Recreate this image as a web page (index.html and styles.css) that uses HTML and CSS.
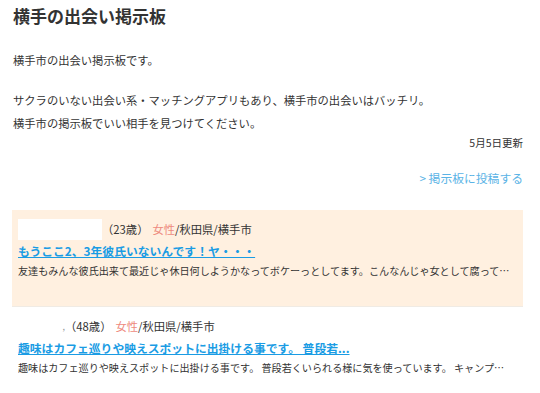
FILE: index.html
```html
<!DOCTYPE html>
<html lang="ja">
<head>
  <meta charset="UTF-8">
  <meta name="viewport" content="width=device-width, initial-scale=1.0">
  <link rel="stylesheet" href="styles.css">
  <title>横手の出会い掲示板</title>
</head>
<body>
  <div class="page">
    <h1>横手の出会い掲示板</h1>
    <p class="intro">横手市の出会い掲示板です。</p>
    <p class="intro">サクラのいない出会い系・マッチングアプリもあり、横手市の出会いはバッチリ。<br>横手市の掲示板でいい相手を見つけてください。</p>
    <div class="updated">5月5日更新</div>
    <div class="post-link"><a href="#">&gt; 掲示板に投稿する</a></div>

    <div class="board">
      <div class="entry entry-hl">
        <div class="entry-meta"><span class="name-box"></span><span class="age">（23歳）</span><span class="sex">女性</span>/秋田県/横手市</div>
        <a class="entry-title" href="#">もうここ2、3年彼氏いないんです！ヤ・・・</a>
        <div class="entry-text">友達もみんな彼氏出来て最近じゃ休日何しようかなってボケーっとしてます。こんなんじゃ女として腐って…</div>
      </div>
      <div class="entry">
        <div class="entry-meta"><span class="name-small">,</span><span class="age">（48歳）</span><span class="sex">女性</span>/秋田県/横手市</div>
        <a class="entry-title" href="#">趣味はカフェ巡りや映えスポットに出掛ける事です。 普段若...</a>
        <div class="entry-text">趣味はカフェ巡りや映えスポットに出掛ける事です。 普段若くいられる様に気を使っています。 キャンプ…</div>
      </div>
    </div>
  </div>
</body>
</html>
```

FILE: styles.css
```css
body {
  font-family: 'Noto Sans CJK JP', 'Noto Sans', sans-serif;
  background-color: #fff;
  color: #333;
  margin: 0;
  padding: 0;
}

.page {
  padding: 5px 17px 0 12px;
}

h1 {
  font-size: 17px;
  font-weight: bold;
  line-height: 22px;
  margin: 0 0 22px 1px;
  color: #333;
}

.intro {
  font-size: 11.3px;
  line-height: 23px;
  margin: 0 0 17px 1px;
}

.intro + .intro {
  margin-bottom: 0;
}

.updated {
  font-size: 10.5px;
  line-height: 16px;
  text-align: right;
}

.post-link {
  font-size: 11.8px;
  line-height: 20px;
  text-align: right;
  margin-top: 17px;
}

.post-link a {
  color: #5ab3e6;
  text-decoration: none;
}

.board {
  margin-top: 22px;
}

.entry {
  padding: 9px 6px 26px;
  border-bottom: 1px solid #f0ebe4;
}

.entry-hl {
  background-color: #fff0e0;
}

.entry-meta {
  font-size: 11.3px;
  line-height: 21px;
  height: 21px;
}

.name-box {
  display: inline-block;
  width: 84px;
  height: 21px;
  vertical-align: top;
  background-color: #fff;
}

.name-small {
  display: inline-block;
  width: 47px;
  text-align: right;
  color: #999;
  font-size: 9px;
  vertical-align: top;
}

.age {
  margin-right: 4px;
}

.sex {
  color: #ee8a7e;
}

.entry-title {
  display: block;
  font-size: 11.8px;
  font-weight: bold;
  line-height: 22px;
  color: #1a9ce4;
  text-decoration: underline;
}

.entry-text {
  font-size: 10.1px;
  line-height: 18px;
  white-space: nowrap;
  overflow: hidden;
}
```
